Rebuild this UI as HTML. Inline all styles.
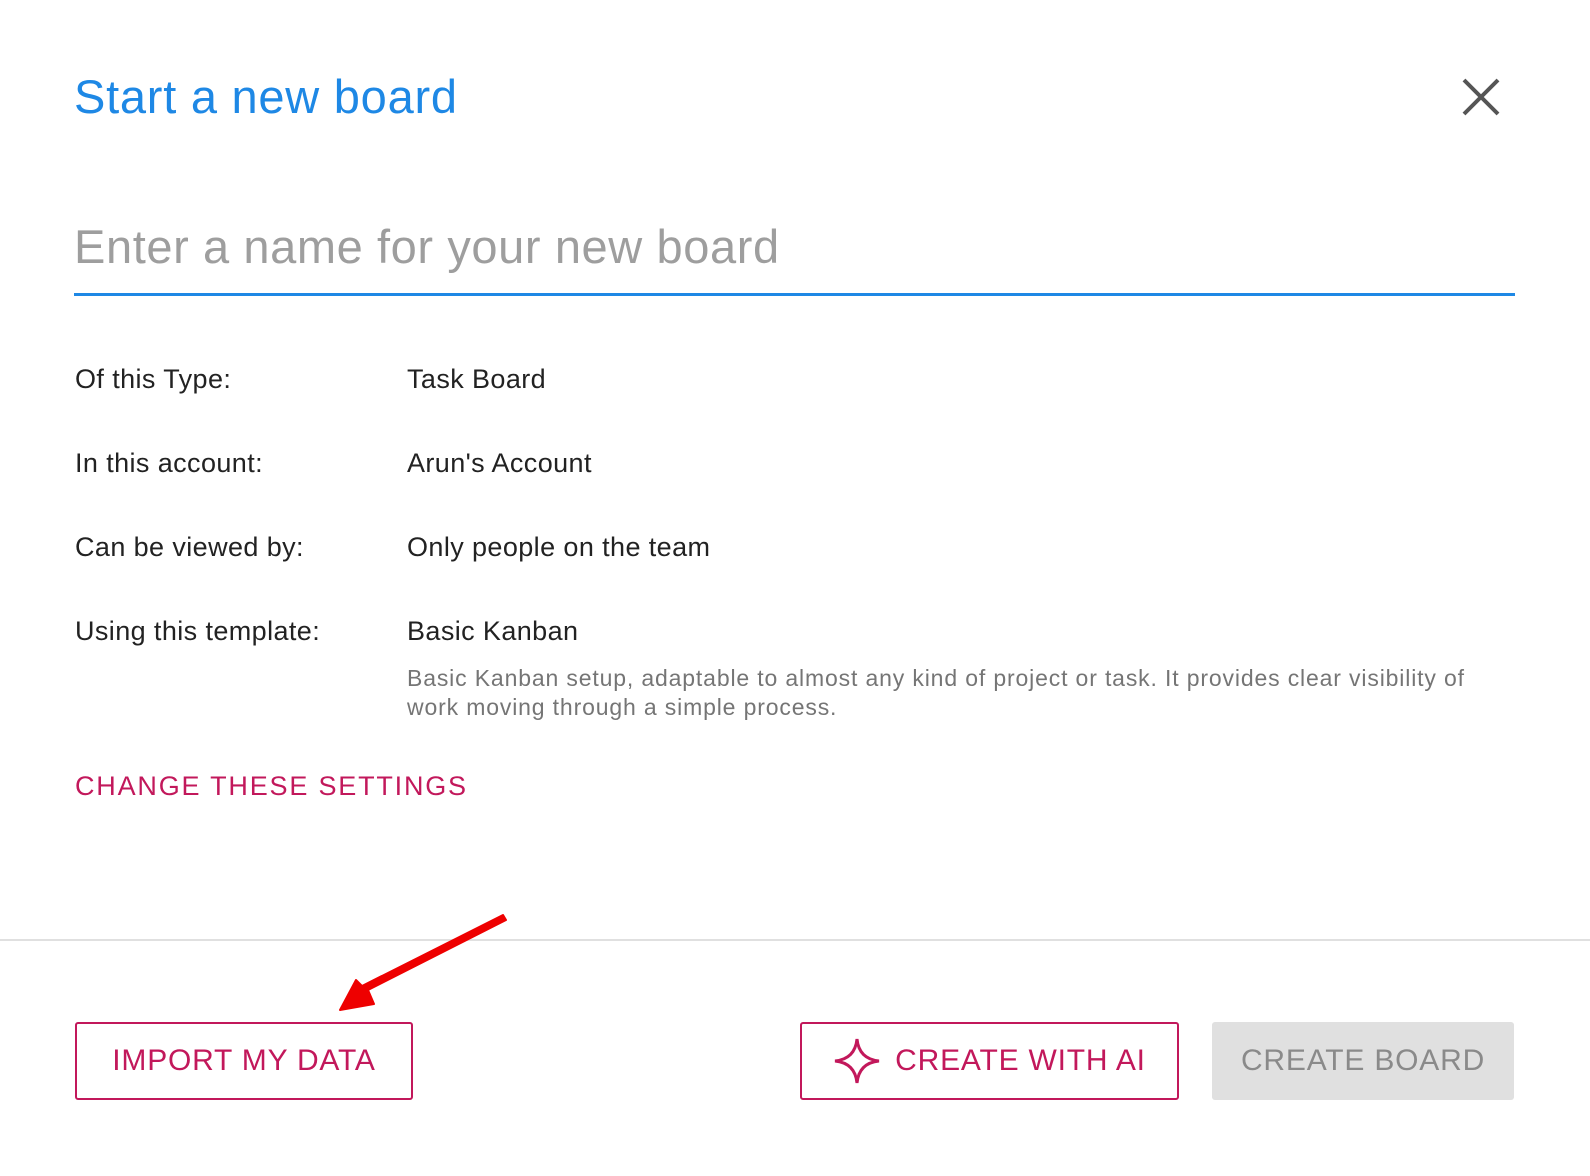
<!DOCTYPE html>
<html><head><style>
body{margin:0;width:1590px;height:1176px;background:#fff;font-family:"Liberation Sans",Roboto,sans-serif;position:relative;overflow:hidden}
.a{position:absolute;white-space:nowrap}
.lab{font-size:27px;color:#222;left:75px;letter-spacing:0.4px}
.val{font-size:27px;color:#222;left:407px;letter-spacing:0.4px}
.btn{position:absolute;box-sizing:border-box;border:2px solid #c2185b;border-radius:3px;color:#c2185b;font-size:30px;letter-spacing:0.8px;display:flex;align-items:center;justify-content:center}
</style></head><body>
<div class="a" style="left:74px;top:69px;font-size:47px;color:#1e88e5;letter-spacing:0.75px">Start a new board</div>
<svg class="a" style="left:1462px;top:78px" width="38" height="38" viewBox="0 0 38 38"><path d="M2 2L36 36M36 2L2 36" stroke="#555" stroke-width="4"/></svg>
<div class="a" style="left:74px;top:219px;font-size:47px;color:#9e9e9e;letter-spacing:0.6px">Enter a name for your new board</div>
<div class="a" style="left:74px;top:293px;width:1441px;height:3px;background:#1e88e5"></div>
<div class="a lab" style="top:364px">Of this Type:</div><div class="a val" style="top:364px">Task Board</div>
<div class="a lab" style="top:448px">In this account:</div><div class="a val" style="top:448px">Arun's Account</div>
<div class="a lab" style="top:532px">Can be viewed by:</div><div class="a val" style="top:532px">Only people on the team</div>
<div class="a lab" style="top:616px">Using this template:</div><div class="a val" style="top:616px">Basic Kanban</div>
<div class="a" style="left:407px;top:664px;font-size:23px;line-height:29px;color:#757575;white-space:normal;width:1090px;letter-spacing:0.85px">Basic Kanban setup, adaptable to almost any kind of project or task. It provides clear visibility of work moving through a simple process.</div>
<div class="a" style="left:75px;top:771px;font-size:27px;letter-spacing:1.8px;color:#c2185b">CHANGE THESE SETTINGS</div>
<div class="a" style="left:0;top:939px;width:1590px;height:2px;background:#e0e0e0"></div>
<div class="btn" style="left:75px;top:1022px;width:338px;height:78px">IMPORT MY DATA</div>
<div class="btn" style="left:800px;top:1022px;width:379px;height:78px"><svg width="48" height="48" viewBox="0 0 48 48" style="margin-right:14px"><path d="M24 2Q26 22 46 24Q26 26 24 46Q22 26 2 24Q22 22 24 2Z" fill="none" stroke="#c2185b" stroke-width="3"/></svg>CREATE WITH AI</div>
<div class="btn" style="left:1212px;top:1022px;width:302px;height:78px;border:none;background:#e0e0e0;color:#8a8a8a">CREATE BOARD</div>
<svg class="a" style="left:330px;top:910px" width="190" height="110" viewBox="330 910 190 110"><path d="M506 920L368 990L374 1004L340 1010L356 980L362 986L503 915Z" fill="#e00" stroke="#e00" stroke-width="2" stroke-linejoin="round"/></svg>
</body></html>
